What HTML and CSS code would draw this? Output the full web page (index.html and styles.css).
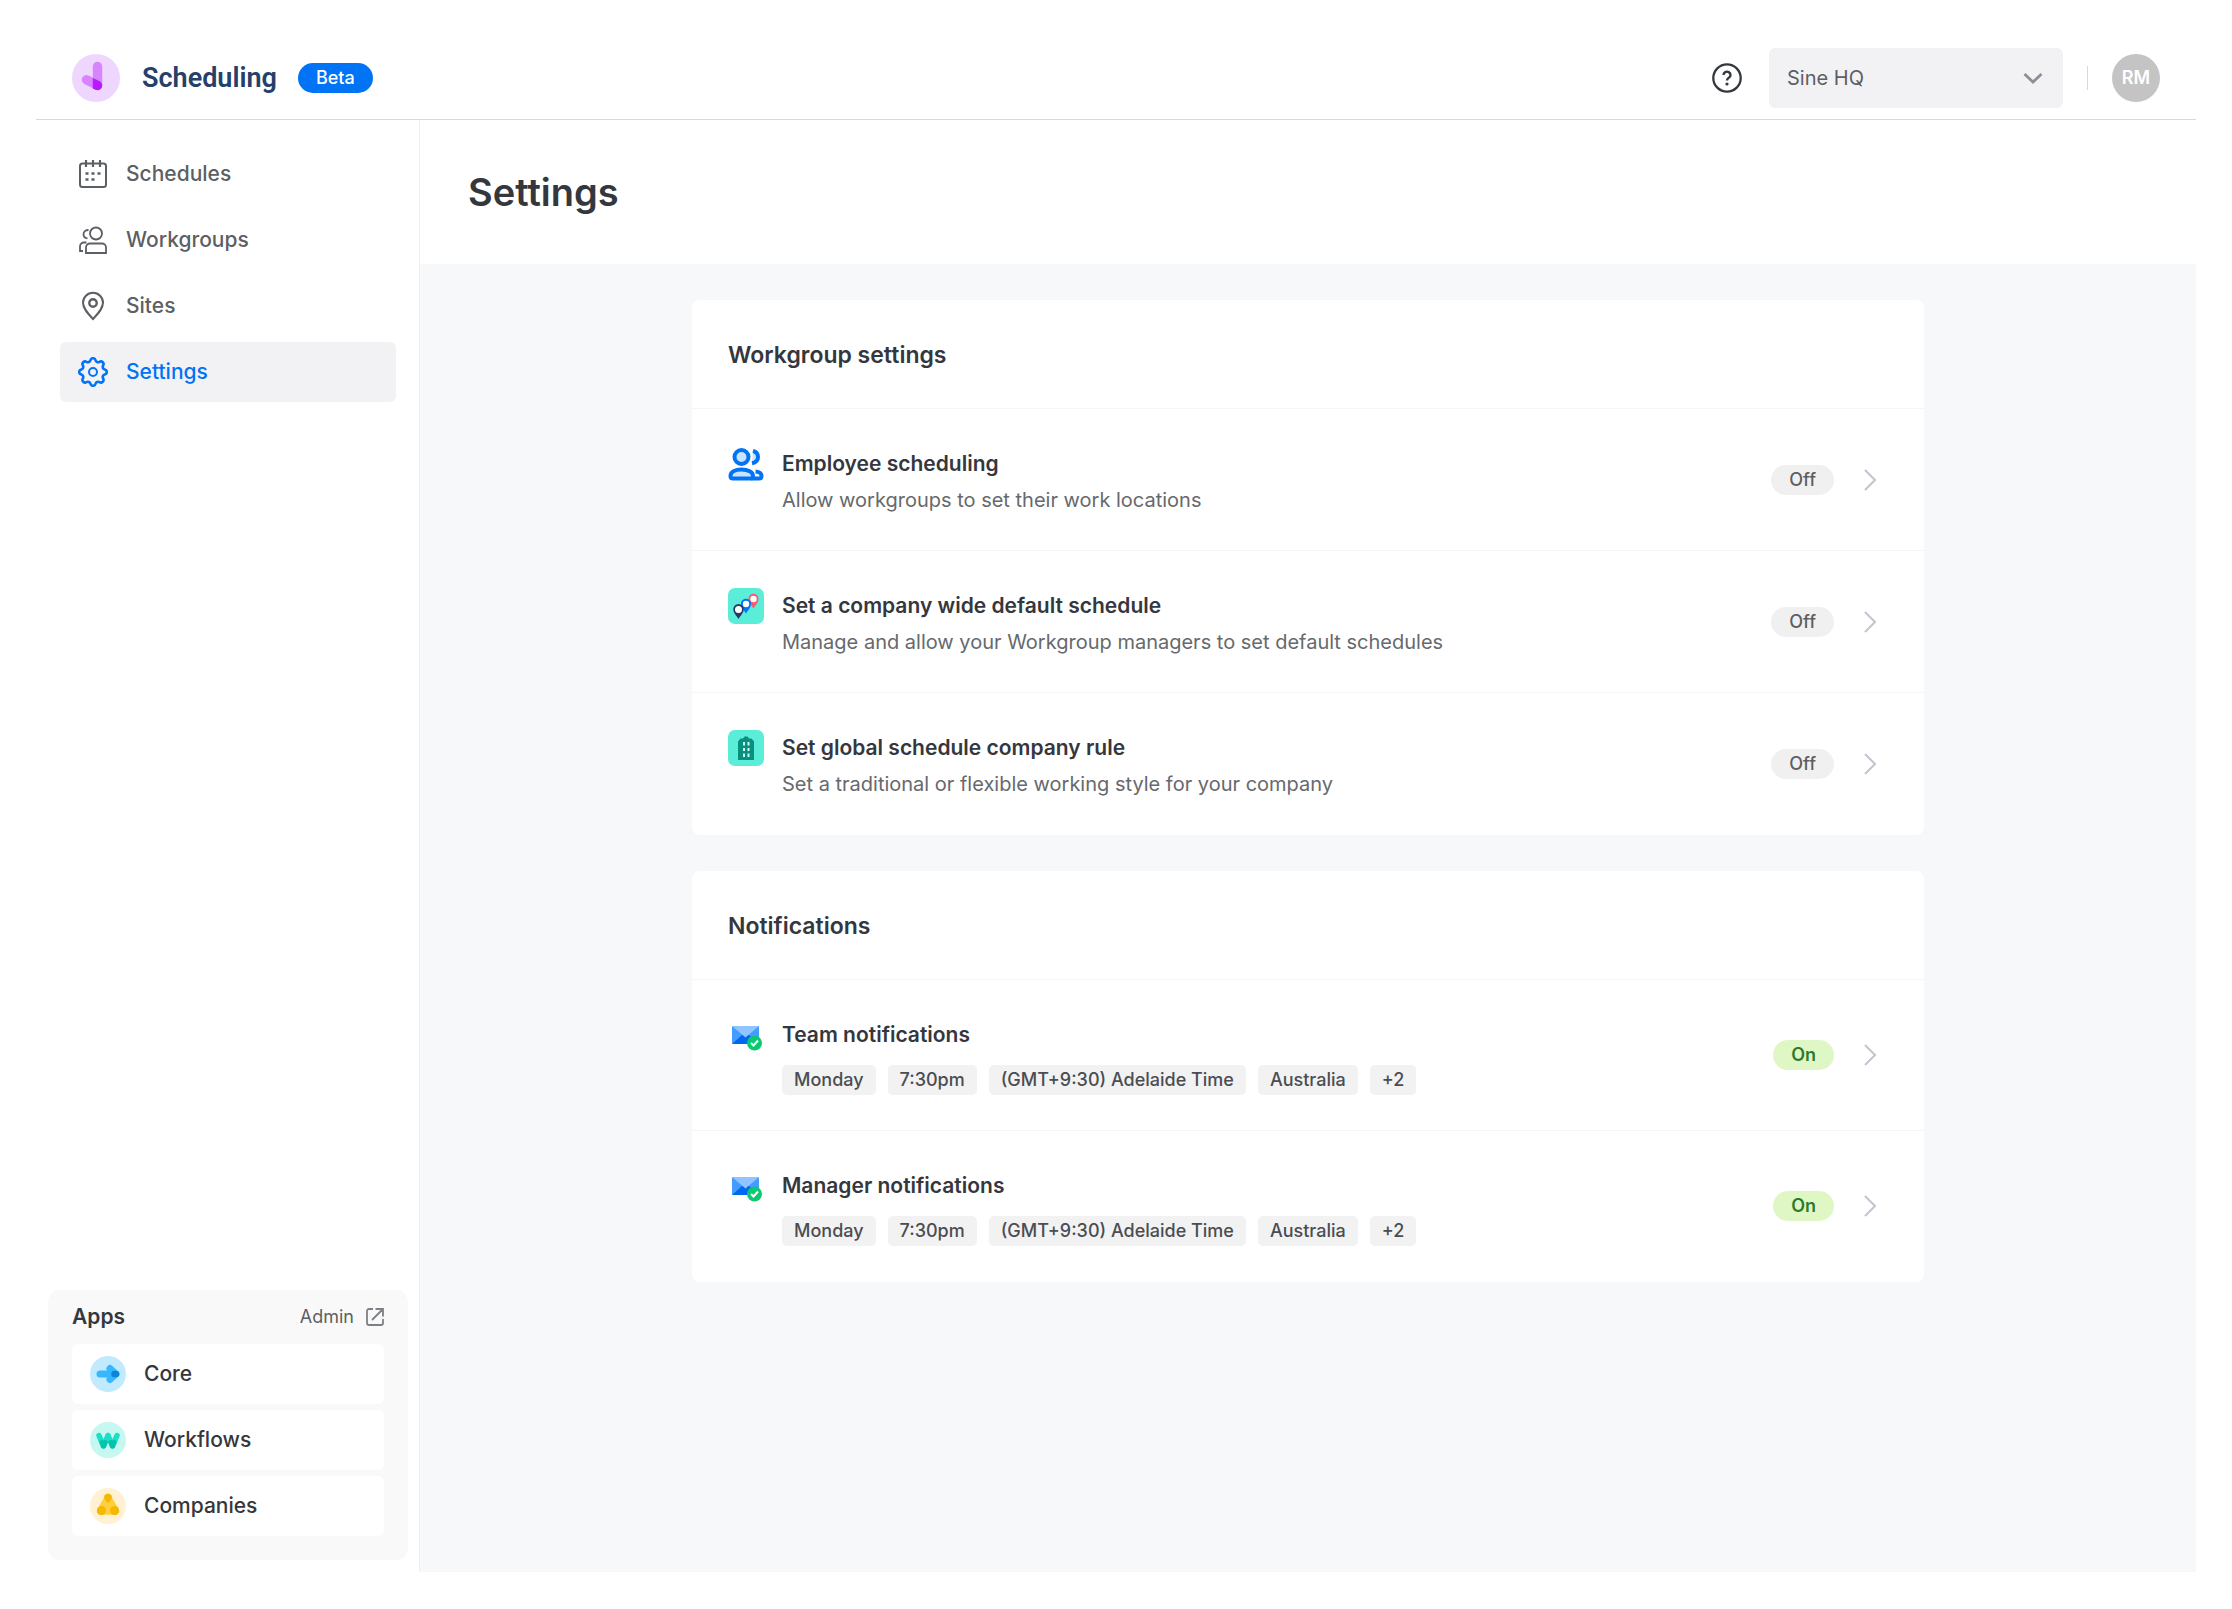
FILE: index.html
```html
<!DOCTYPE html>
<html lang="en">
<head>
<meta charset="utf-8">
<meta name="viewport" content="width=device-width, initial-scale=1">
<title>Settings – Scheduling</title>
<link rel="stylesheet" href="styles.css">
</head>
<body>
<header class="topbar">
  <a class="brand" href="#">
    <svg class="brand-logo" viewBox="0 0 48 48" aria-hidden="true">
      <circle cx="24" cy="24" r="24" fill="#efd6ff"/>
      <path d="M25.500 12.500v19" stroke="#d884ff" stroke-width="9.400" stroke-linecap="round"/>
      <path d="M14.500 25.700l11 5.500" stroke="#d884ff" stroke-width="9.400" stroke-linecap="round"/>
      <path d="M20.800 24l7 3.200a4.800 4.800 0 0 1 2.400 4.300a4.700 4.700 0 0 1-6.700 4.200l-2.700-1.300z" fill="#b61aff"/>
    </svg>
    <span class="brand-name">Scheduling</span>
  </a>
  <span class="beta">Beta</span>
  <div class="topbar-tools">
    <button class="help" type="button" aria-label="Help">
      <svg viewBox="0 0 30 30" fill="none" stroke="#34373d" aria-hidden="true">
        <circle cx="15" cy="15" r="13.700" stroke-width="2.300"/>
        <path d="M11.500 12a3.500 3.300 0 1 1 5.300 2.800c-1.200.7-1.800 1.300-1.800 2.700" stroke-width="2.400"/>
        <circle cx="15" cy="21" r="1.600" fill="#34373d" stroke="none"/>
      </svg>
    </button>
    <div class="company">
      <select class="company-select" aria-label="Company">
        <option>Sine HQ</option>
      </select>
      <svg class="company-arrow" viewBox="0 0 24 24" fill="none" stroke="#8a8f99" stroke-width="2.800" aria-hidden="true"><path d="M3.500 8l8.500 8 8.500-8"/></svg>
    </div>
    <span class="divider"></span>
    <button class="avatar" type="button">RM</button>
  </div>
</header>

<div class="shell">
  <aside class="sidebar">
    <nav class="nav">
      <a class="nav-item" href="#">
        <svg class="nav-icon" viewBox="0 0 30 30" fill="none" stroke="currentColor" stroke-width="2" aria-hidden="true">
          <rect x="2" y="4.500" width="26" height="23.500" rx="2.500"/>
          <path d="M8 1v7M15 1v7M22 1v7" stroke-width="2.200"/>
          <path d="M7.500 14.500h3M13.500 14.500h3M19.500 14.500h3M7.500 20.500h3M13.500 20.500h3" stroke-width="2.400"/>
        </svg>
        Schedules
      </a>
      <a class="nav-item" href="#">
        <svg class="nav-icon" viewBox="0 0 30 30" fill="none" stroke="currentColor" stroke-width="1.800" aria-hidden="true">
          <circle cx="18" cy="8.500" r="6"/>
          <path d="M10.500 5c-3 0-5 1.800-5 4.200s1.700 3.800 4 4.200"/>
          <path d="M8 28v-5.500a4 4 0 0 1 4-4h12a4 4 0 0 1 4 4V28z"/>
          <path d="M8.500 17.500H6a4 4 0 0 0-4 4V26h3"/>
        </svg>
        Workgroups
      </a>
      <a class="nav-item" href="#">
        <svg class="nav-icon" viewBox="0 0 30 30" fill="none" stroke="currentColor" stroke-width="2" aria-hidden="true">
          <path d="M15 28C10 22.500 5 17.500 5 11.800a10 10 0 0 1 20 0C25 17.500 20 22.500 15 28z"/>
          <circle cx="15" cy="12" r="3.700" stroke-width="2.400"/>
        </svg>
        Sites
      </a>
      <a class="nav-item nav-item-active" href="#" aria-current="page">
        <svg class="nav-icon" viewBox="2.200 2.200 19.600 19.600" fill="none" stroke="currentColor" stroke-width="1.700" aria-hidden="true">
          <path d="M10.325 4.317c.426-1.756 2.924-1.756 3.350 0a1.724 1.724 0 002.573 1.066c1.543-.94 3.310.826 2.370 2.370a1.724 1.724 0 001.065 2.572c1.756.426 1.756 2.924 0 3.350a1.724 1.724 0 00-1.066 2.573c.94 1.543-.826 3.310-2.370 2.370a1.724 1.724 0 00-2.572 1.065c-.426 1.756-2.924 1.756-3.350 0a1.724 1.724 0 00-2.573-1.066c-1.543.94-3.310-.826-2.370-2.370a1.724 1.724 0 00-1.065-2.572c-1.756-.426-1.756-2.924 0-3.350a1.724 1.724 0 001.066-2.573c-.94-1.543.826-3.310 2.370-2.370.996.608 2.296.070 2.572-1.065z"/>
          <circle cx="12" cy="12" r="2.600" stroke-width="1.300"/>
        </svg>
        Settings
      </a>
    </nav>

    <section class="apps">
      <div class="apps-head">
        <h2 class="apps-title">Apps</h2>
        <a class="apps-admin" href="#">Admin
          <svg class="apps-admin-icon" viewBox="0 0 18 18" fill="none" stroke="#7d8084" stroke-width="1.800" aria-hidden="true">
            <path d="M7 1H3a2 2 0 0 0-2 2v12a2 2 0 0 0 2 2h12a2 2 0 0 0 2-2v-4M9.500 1H17v7.500M17 1L6 12" />
          </svg>
        </a>
      </div>
      <a class="app" href="#">
        <svg class="app-icon" viewBox="0 0 36 36" fill="none" stroke-linecap="round" stroke-linejoin="round" aria-hidden="true">
          <circle cx="18" cy="18" r="18" fill="#c2eaff"/>
          <path d="M10 18h14M20 12.500l6 5.500-6 5.500" stroke="#35b8ff" stroke-width="7"/>
          <path d="M24.500 18h1.500" stroke="#0a86d4" stroke-width="6.500"/>
        </svg>
        Core
      </a>
      <a class="app" href="#">
        <svg class="app-icon" viewBox="0 0 36 36" fill="none" stroke-linecap="round" stroke-width="5.500" aria-hidden="true">
          <circle cx="18" cy="18" r="18" fill="#c6f8f1"/>
          <path d="M9 13.500l4.500 10.500M18 13.500l4.500 10.500M18 13.500l-4.500 10.500M27 13.500l-4.500 10.500" stroke="#18dfc5"/>
          <path d="M13.500 24l1.500-3.500M22.500 24l-1.500-3.500M13.500 24l-1.500-3.500M22.500 24l1.500-3.500" stroke="#05c3aa" stroke-width="5"/>
        </svg>
        Workflows
      </a>
      <a class="app" href="#">
        <svg class="app-icon" viewBox="0 0 36 36" aria-hidden="true">
          <circle cx="18" cy="18" r="18" fill="#fff1d1"/>
          <path d="M18 10l7.500 13h-15z" fill="#ffcf40" stroke="#ffcf40" stroke-width="7.500" stroke-linejoin="round"/>
          <path d="M18 15.500l-3.500-4.500a3.900 3.900 0 1 1 7 0z" fill="#f5b800"/>
          <circle cx="11.500" cy="22.500" r="4.500" fill="#f5b800"/>
          <circle cx="24.500" cy="22.500" r="4.500" fill="#f5b800"/>
        </svg>
        Companies
      </a>
    </section>
  </aside>

  <main class="main">
    <div class="page-head"><h1 class="page-title">Settings</h1></div>
    <div class="content">
      <section class="card">
        <h2 class="card-title">Workgroup settings</h2>
        <a class="row" href="#">
          <svg class="row-icon" viewBox="0 0 36 36" fill="none" stroke="#0074f5" stroke-width="4" aria-hidden="true">
            <circle cx="13.500" cy="11" r="7" fill="#cce3fd"/>
            <path d="M25 5c3.200.8 5 3 5 6s-2 5.500-6 6.200" fill="#cce3fd"/>
            <path d="M2.500 30c0-4 4.500-6.500 11-6.500s11.500 2.500 11.500 6.500c0 1.500-1 2.500-2.500 2.500H5c-1.500 0-2.500-1-2.500-2.500z" fill="#cce3fd"/>
            <path d="M27.500 25.500c3.500.3 6 1.800 6 4.500 0 1.500-1 2.500-2.500 2.500h-8"/>
          </svg>
          <div class="row-body">
            <h3 class="row-title">Employee scheduling</h3>
            <p class="row-text">Allow workgroups to set their work locations</p>
          </div>
          <span class="state">Off</span>
          <svg class="row-arrow" viewBox="0 0 36 36" aria-hidden="true"><path d="M13 8l10 10-10 10"/></svg>
        </a>
        <a class="row" href="#">
          <svg class="row-icon" viewBox="0 0 36 36" aria-hidden="true">
            <rect width="36" height="36" rx="7" fill="#5aedd8"/>
            <path d="M25.500 20.500c-2-3.500-5-6-5-9.800a5 5 0 0 1 10 0c0 3.800-3 6.300-5 9.800z" fill="#fa5a6e"/>
            <circle cx="25.500" cy="11" r="3.200" fill="#fff"/>
            <path d="M18 25.500c-2-3.500-5-6-5-9.800a5 5 0 0 1 10 0c0 3.800-3 6.300-5 9.800z" fill="#0074f5"/>
            <circle cx="18" cy="16" r="3.200" fill="#fff"/>
            <path d="M10.500 31c-2-3.500-5.200-6-5.200-9.800a5.200 5.200 0 0 1 10.400 0c0 3.800-3.200 6.300-5.200 9.800z" fill="#253a66"/>
            <circle cx="10.500" cy="21.500" r="3.500" fill="#fff"/>
          </svg>
          <div class="row-body">
            <h3 class="row-title">Set a company wide default schedule</h3>
            <p class="row-text">Manage and allow your Workgroup managers to set default schedules</p>
          </div>
          <span class="state">Off</span>
          <svg class="row-arrow" viewBox="0 0 36 36" aria-hidden="true"><path d="M13 8l10 10-10 10"/></svg>
        </a>
        <a class="row" href="#">
          <svg class="row-icon" viewBox="0 0 36 36" aria-hidden="true">
            <rect width="36" height="36" rx="7" fill="#5aedd8"/>
            <path d="M10 30V11.500L12.500 8.500H15L16.500 6.500h3L21 8.500h2.500l2.500 3V30z" fill="#088f7d"/>
            <path d="M16 12v3.500M20.500 12v3.500M16 18v3M20.500 18v3M16 23.500v3.500M20.500 23.500v3.500" stroke="#c9fff5" stroke-width="2"/>
          </svg>
          <div class="row-body">
            <h3 class="row-title">Set global schedule company rule</h3>
            <p class="row-text">Set a traditional or flexible working style for your company</p>
          </div>
          <span class="state">Off</span>
          <svg class="row-arrow" viewBox="0 0 36 36" aria-hidden="true"><path d="M13 8l10 10-10 10"/></svg>
        </a>
      </section>

      <section class="card">
        <h2 class="card-title">Notifications</h2>
        <a class="row" href="#">
          <svg class="row-icon" viewBox="0 0 36 36" aria-hidden="true">
            <rect x="4" y="9" width="27" height="18" rx="1" fill="#459cff"/>
            <path d="M4 27l10-9h7l10 9z" fill="#0068ee"/>
            <path d="M4 9h27L17.500 20.500z" fill="#8fc4ff"/>
            <circle cx="26.500" cy="26" r="7.500" fill="#0bc873"/>
            <path d="M23 26l2.500 2.500 4.500-5" fill="none" stroke="#fff" stroke-width="2"/>
          </svg>
          <div class="row-body row-body-tagged">
            <h3 class="row-title">Team notifications</h3>
            <ul class="tags">
              <li class="tag">Monday</li><li class="tag">7:30pm</li><li class="tag">(GMT+9:30) Adelaide Time</li><li class="tag">Australia</li><li class="tag">+2</li>
            </ul>
          </div>
          <span class="state state-on">On</span>
          <svg class="row-arrow" viewBox="0 0 36 36" aria-hidden="true"><path d="M13 8l10 10-10 10"/></svg>
        </a>
        <a class="row" href="#">
          <svg class="row-icon" viewBox="0 0 36 36" aria-hidden="true">
            <rect x="4" y="9" width="27" height="18" rx="1" fill="#459cff"/>
            <path d="M4 27l10-9h7l10 9z" fill="#0068ee"/>
            <path d="M4 9h27L17.500 20.500z" fill="#8fc4ff"/>
            <circle cx="26.500" cy="26" r="7.500" fill="#0bc873"/>
            <path d="M23 26l2.500 2.500 4.500-5" fill="none" stroke="#fff" stroke-width="2"/>
          </svg>
          <div class="row-body row-body-tagged">
            <h3 class="row-title">Manager notifications</h3>
            <ul class="tags">
              <li class="tag">Monday</li><li class="tag">7:30pm</li><li class="tag">(GMT+9:30) Adelaide Time</li><li class="tag">Australia</li><li class="tag">+2</li>
            </ul>
          </div>
          <span class="state state-on">On</span>
          <svg class="row-arrow" viewBox="0 0 36 36" aria-hidden="true"><path d="M13 8l10 10-10 10"/></svg>
        </a>
      </section>
    </div>
  </main>
</div>
</body>
</html>
```
FILE: styles.css
```css
* { box-sizing: border-box; }

body {
  display: flex;
  flex-direction: column;
  min-height: 100vh;
  margin: 0;
  padding: 36px 36px 37px;
  background: #fff;
  color: #34373d;
  font: 400 21px/30px Inter, "Liberation Sans", sans-serif;
}

h1, h2, h3, p, ul { margin: 0; padding: 0; }
a { color: inherit; text-decoration: none; }
button { padding: 0; border: 0; background: none; font: inherit; cursor: pointer; }
svg { display: block; flex: none; }

/* Top bar */
.topbar {
  display: flex;
  align-items: center;
  padding: 12px 36px 11px;
  border-bottom: 1px solid #d5dae2;
}
.brand { display: flex; align-items: center; gap: 22px; }
.brand-logo { width: 48px; height: 48px; }
.brand-name { color: #24406b; font: 600 27px/36px Roboto, sans-serif; }
.beta {
  margin-left: 21px;
  padding: 0 18px;
  border-radius: 15px;
  background: #0074f5;
  color: #fff;
  font-size: 18px;
  font-weight: 500;
}
.topbar-tools { display: flex; align-items: center; margin-left: auto; }
.help { width: 30px; height: 30px; margin-right: 27px; }
.company { position: relative; width: 294px; }
.company-select {
  width: 100%;
  height: 60px;
  padding: 0 54px 0 18px;
  border: 0;
  border-radius: 6px;
  background: #f2f2f5;
  color: #5c5f63;
  font: inherit;
  font-size: 20px;
  appearance: none;
}
.company-arrow {
  position: absolute;
  top: 18px;
  right: 18px;
  width: 24px;
  height: 24px;
  pointer-events: none;
}
.divider { width: 1px; height: 24px; margin: 0 24px; background: #d5dae2; }
.avatar {
  width: 48px;
  height: 48px;
  border-radius: 50%;
  background: #c4c4c4;
  color: #fff;
  font-size: 18px;
  font-weight: 600;
}

/* Layout */
.shell { display: flex; flex: 1; }
.sidebar {
  display: flex;
  flex: none;
  flex-direction: column;
  justify-content: space-between;
  gap: 24px;
  width: 384px;
  padding: 24px 11px 12px 12px;
  border-right: 1px solid #eceef1;
}
.nav { display: flex; flex-direction: column; gap: 6px; padding: 0 12px; }
.nav-item {
  display: flex;
  align-items: center;
  gap: 18px;
  height: 60px;
  padding: 0 18px;
  border-radius: 6px;
  color: #5c5f63;
  font-weight: 500;
}
.nav-item-active { background: #f2f2f5; color: #0074f5; }
.nav-icon { width: 30px; height: 30px; }

.apps {
  display: flex;
  flex-direction: column;
  gap: 6px;
  padding: 9px 24px 24px;
  border-radius: 12px;
  background: #f9f9f9;
}
.apps-head {
  display: flex;
  align-items: center;
  justify-content: space-between;
  height: 36px;
  margin-bottom: 3px;
}
.apps-title { font-size: 21px; font-weight: 600; }
.apps-admin { display: flex; align-items: center; gap: 12px; color: #5c5f63; font-size: 18px; }
.apps-admin-icon { width: 18px; height: 18px; }
.app {
  display: flex;
  align-items: center;
  gap: 18px;
  height: 60px;
  padding: 0 18px;
  border-radius: 6px;
  background: #fff;
  font-weight: 500;
}
.app-icon { width: 36px; height: 36px; }

.main { display: flex; flex: 1; flex-direction: column; min-width: 0; background: #f7f8fa; }
.page-head { padding: 48px; background: #fff; }
.page-title { font-size: 38px; font-weight: 600; line-height: 48px; }
.content {
  display: flex;
  flex-direction: column;
  gap: 36px;
  width: 100%;
  max-width: 1304px;
  margin: 0 auto;
  padding: 36px;
}

/* Cards */
.card { border-radius: 8px; background: #fff; }
.card-title {
  padding: 37px 36px 35px;
  border-bottom: 1px solid #f5f6f8;
  font-size: 23px;
  font-weight: 600;
  line-height: 36px;
}
.row {
  display: flex;
  align-items: center;
  padding: 0 36px;
  border-bottom: 1px solid #f5f6f8;
}
.row:last-child { border-color: transparent; }
.row-icon { align-self: flex-start; width: 36px; height: 36px; margin-top: 37px; }
.row-body { flex: 1; min-width: 0; padding: 37px 18px 32px; }
.row-body-tagged { padding-bottom: 35px; }
.row-title { font-size: 21px; font-weight: 600; line-height: 36px; }
.row-text { color: #66696d; font-size: 20px; line-height: 36px; }
.row-arrow {
  width: 36px;
  height: 36px;
  fill: none;
  stroke: #c2c5cf;
  stroke-width: 2;
}
.tags { display: flex; flex-wrap: wrap; gap: 12px; margin-top: 12px; list-style: none; }
.tag {
  padding: 0 12px;
  border-radius: 5px;
  background: #f2f2f2;
  color: #4a4d52;
  font-size: 18px;
  font-weight: 500;
}
.state {
  margin-right: 18px;
  padding: 0 18px;
  border-radius: 15px;
  background: #f0f0f0;
  color: #5c5f63;
  font-size: 18px;
  font-weight: 500;
}
.state-on { background: #dff7c4; color: #2d7a2a; font-weight: 600; }
```
